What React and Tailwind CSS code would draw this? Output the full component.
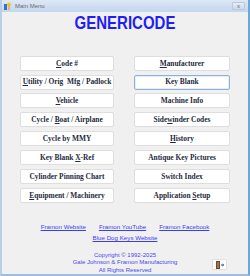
import React from 'react';

const U = ({ children }) => <span className="underline underline-offset-1">{children}</span>;

const leftButtons = [
  <><U>C</U>ode #</>,
  <><U>U</U>tility / Orig  Mfg / Padlock</>,
  <><U>V</U>ehicle</>,
  <>Cycle / <U>B</U>oat / Airplane</>,
  <>Cycle by MMY</>,
  <>Key Blank <U>X</U>-Ref</>,
  <>Cylinder Pinning Chart</>,
  <><U>E</U>quipment / Machinery</>,
];

const rightButtons = [
  <><U>M</U>anufacturer</>,
  <>Key Blank</>,
  <>Machine Info</>,
  <>Side<U>w</U>inder Codes</>,
  <><U>H</U>istory</>,
  <>Antique Key Pictures</>,
  <>Switch Index</>,
  <>Application <U>S</U>etup</>,
];

const MenuButton = ({ children, focused }) => (
  <button
    className={
      'h-[15px] w-full rounded-[2px] bg-white whitespace-pre text-[7.4px] font-bold leading-none text-[#262b40] ' +
      (focused
        ? 'border border-[#8fb0d8] shadow-[inset_0_0_0_1px_#e4eefa]'
        : 'border border-[#dedede]')
    }
    style={{ fontFamily: '"Liberation Serif", serif' }}
  >
    {children}
  </button>
);

export default function App() {
  const rows = leftButtons.map((l, i) => [l, rightButtons[i]]);
  return (
    <div
      className="w-[250px] h-[276px] flex flex-col bg-[#f0f0f0] border-l-[2px] border-r-[2px] border-b-[2px] border-l-[#b9cfe8] border-r-[#6fa6d8] border-b-[#9dbde0]"
      style={{ fontFamily: '"Liberation Sans", Arial, sans-serif' }}
    >
      {/* title bar */}
      <div className="h-[12px] flex items-center bg-gradient-to-b from-[#dde8f5] to-[#c3d6ed] px-[1px]">
        <svg width="8" height="8" viewBox="0 0 8 8" className="ml-[1px]">
          <rect x="0" y="2" width="3" height="6" fill="#3a6fc4" />
          <circle cx="5" cy="2.5" r="2" fill="#f2c230" />
          <rect x="4.4" y="3.5" width="1.3" height="4.5" fill="#e0a820" />
        </svg>
        <span className="ml-[3px] text-[6px] text-[#6a6a6a] leading-none">Main Menu</span>
        <div className="ml-auto mr-[2px] w-[13px] h-[8px] rounded-[1px] border border-[#b7c8dc] bg-gradient-to-b from-[#e6edf5] to-[#cdd9e7] flex items-center justify-center">
          <span className="text-[6px] leading-none text-[#666]">x</span>
        </div>
      </div>

      {/* heading */}
      <div className="flex justify-center mt-[3px] h-[16px] items-center">
        <h1 className="text-[15px] font-bold text-[#1e1ef5] leading-none scale-y-[1.18]">GENERICODE</h1>
      </div>

      {/* buttons */}
      <div className="mt-[25px] ml-[18px] mr-[18px] grid grid-cols-[94px_96px] justify-between gap-y-[3.85px]">
        {rows.map(([l, r], i) => (
          <React.Fragment key={i}>
            <MenuButton>{l}</MenuButton>
            <MenuButton focused={i === 1}>{r}</MenuButton>
          </React.Fragment>
        ))}
      </div>

      {/* links */}
      <div className="mt-[21px] flex justify-center gap-[13px] text-[6.2px] leading-none text-[#3c3cf0] underline">
        <span>Framon Website</span>
        <span>Framon YouTube</span>
        <span>Framon Facebook</span>
      </div>
      <div className="mt-[5px] flex justify-center text-[6.2px] leading-none text-[#3c3cf0] underline">
        <span>Blue Dog Keys Website</span>
      </div>

      {/* copyright + exit */}
      <div className="relative mt-[11px] flex flex-col items-center text-[6px] leading-[7.3px] text-[#4848e8]">
        <span>Copyright © 1992-2025</span>
        <span>Gale Johnson &amp; Framon Manufacturing</span>
        <span>All Rights Reserved</span>
        <button className="absolute right-[21px] top-[7px] w-[15px] h-[11px] bg-white border border-[#e0e0e0] rounded-[1px] flex items-center justify-center">
          <svg width="10" height="8" viewBox="0 0 10 8">
            <rect x="1" y="0" width="4" height="8" fill="#6b4a2a" />
            <rect x="2" y="1" width="2" height="6" fill="#a07850" />
            <path d="M6 4 H8.5 M7.5 3 L8.7 4 L7.5 5" stroke="#2040c0" strokeWidth="1" fill="none" />
          </svg>
        </button>
      </div>
    </div>
  );
}
